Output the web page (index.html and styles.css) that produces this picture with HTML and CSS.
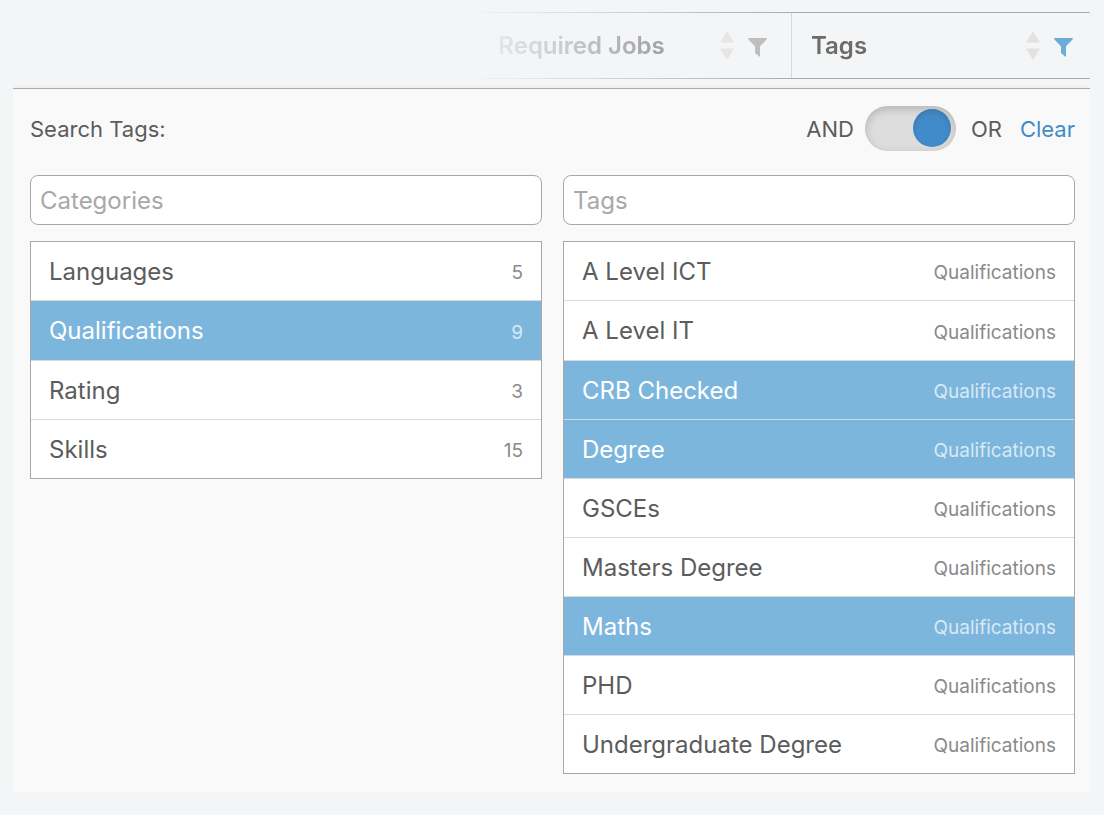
FILE: index.html
```html
<!DOCTYPE html>
<html lang="en">
<head>
<meta charset="utf-8">
<title>Search Tags</title>
<link rel="stylesheet" href="styles.css">
</head>
<body>
<svg class="defs" aria-hidden="true">
  <symbol id="sort" viewBox="0 0 14 29"><path d="M7 0L14 11.500H0ZM0 17.500H14L7 29Z"/></symbol>
  <symbol id="funnel" viewBox="0 0 19 19"><path d="M0.500 0H18.500Q19 0 18.800 1.200L12 8.200V18.200Q12 19 11.200 18.600L7.500 15.500Q7 15 7 14.500V8.200L0.200 1.200Q0 0 0.500 0Z"/></symbol>
</svg>
<main class="page">
  <header class="columns">
    <div class="column">
      <span class="column-name">Required Jobs</span>
      <button class="icon-button" type="button" aria-label="Sort by required jobs"><svg class="sort"><use href="#sort"/></svg></button>
      <button class="icon-button filter" type="button" aria-label="Filter required jobs"><svg class="funnel"><use href="#funnel"/></svg></button>
    </div>
    <div class="column column-tags">
      <span class="column-name">Tags</span>
      <button class="icon-button" type="button" aria-label="Sort by tags"><svg class="sort"><use href="#sort"/></svg></button>
      <button class="icon-button filter" type="button" aria-label="Filter tags"><svg class="funnel funnel-active"><use href="#funnel"/></svg></button>
    </div>
  </header>
  <section class="panel">
    <div class="toolbar">
      <h1 class="title">Search Tags:</h1>
      <label class="mode" for="mode">AND</label>
      <input class="toggle" id="mode" type="checkbox" role="switch" checked>
      <label class="mode mode-or" for="mode">OR</label>
      <a class="clear" href="#">Clear</a>
    </div>
    <div class="pickers">
      <div class="picker">
        <input class="search" type="text" placeholder="Categories" aria-label="Categories">
        <ul class="list">
          <li class="row"><button class="option" type="button">Languages<span class="note">5</span></button></li>
          <li class="row"><button class="option selected" type="button">Qualifications<span class="note">9</span></button></li>
          <li class="row"><button class="option" type="button">Rating<span class="note">3</span></button></li>
          <li class="row"><button class="option" type="button">Skills<span class="note">15</span></button></li>
        </ul>
      </div>
      <div class="picker">
        <input class="search" type="text" placeholder="Tags" aria-label="Tags">
        <ul class="list">
          <li class="row"><button class="option" type="button">A Level ICT<span class="note">Qualifications</span></button></li>
          <li class="row"><button class="option" type="button">A Level IT<span class="note">Qualifications</span></button></li>
          <li class="row"><button class="option selected" type="button">CRB Checked<span class="note">Qualifications</span></button></li>
          <li class="row"><button class="option selected" type="button">Degree<span class="note">Qualifications</span></button></li>
          <li class="row"><button class="option" type="button">GSCEs<span class="note">Qualifications</span></button></li>
          <li class="row"><button class="option" type="button">Masters Degree<span class="note">Qualifications</span></button></li>
          <li class="row"><button class="option selected" type="button">Maths<span class="note">Qualifications</span></button></li>
          <li class="row"><button class="option" type="button">PHD<span class="note">Qualifications</span></button></li>
          <li class="row"><button class="option" type="button">Undergraduate Degree<span class="note">Qualifications</span></button></li>
        </ul>
      </div>
    </div>
  </section>
</main>
</body>
</html>
```

FILE: styles.css
```css
* { box-sizing: border-box; }
body {
  margin: 0;
  background: #f4f5f7;
  color: #5c5c5c;
  font-family: Inter, "Liberation Sans", sans-serif;
  font-size: 24px;
  line-height: 32px;
}
button, input { font: inherit; color: inherit; margin: 0; }
.defs { position: absolute; width: 0; height: 0; }
.page { padding: 12px 14px 23px 13px; }

.columns {
  display: flex;
  width: 58%;
  margin-left: auto;
  border: solid #a9abad;
  border-width: 1px 0;
  -webkit-mask-image: linear-gradient(to right, transparent, #000 52%);
  mask-image: linear-gradient(to right, transparent, #000 52%);
}
.column {
  display: flex;
  align-items: center;
  gap: 14px;
  flex: 1 1 0;
  height: 65px;
  padding: 0 24px 0 33px;
  border-right: 1px solid #d6d8da;
}
.column-tags { flex: 0 0 298px; padding: 0 17px 0 19px; border-right: 0; }
.column-name { flex: 1; font-weight: 600; color: #6c6c6c; }
.icon-button { display: flex; padding: 0; border: 0; background: none; }
.filter { padding-top: 4px; }
.sort { width: 14px; height: 29px; fill: #e2e2e2; }
.funnel { width: 19px; height: 19px; fill: #b8b8b8; }
.funnel-active { fill: #6cacd9; }

.panel {
  margin-top: 9px;
  padding: 17px 15px 18px 17px;
  border-top: 1px solid #a9abad;
  background: #f9f9f9;
  box-shadow: 0 -3px 4px #efefef, 0 -9px 4px -3px #f8f8f8;
  clip-path: inset(-9px 0 0 0);
}
.toolbar { display: flex; align-items: center; height: 45px; margin-bottom: 24px; font-size: 22px; }
.title { flex: 1; margin: 0; font-size: 22px; font-weight: 400; }
.mode { margin-right: 11px; }
.mode-or { margin: 0 18px 0 15px; }
.clear { color: #428bca; text-decoration: none; }
.toggle {
  appearance: none;
  display: flex;
  width: 91px;
  height: 45px;
  padding: 3px 5px;
  border-radius: 23px;
  background: #dddddd;
  box-shadow: inset 0 3px 8px #00000030;
}
.toggle::before {
  content: "";
  width: 38px;
  height: 38px;
  border-radius: 50%;
  background: #428bca;
  box-shadow: inset 0 3px 6px #00000022;
}
.toggle:checked { justify-content: flex-end; }

.pickers { display: grid; grid-template-columns: 1fr 1fr; gap: 21px; align-items: start; }
.picker { display: flex; flex-direction: column; gap: 16px; }
.search {
  width: 100%;
  height: 50px;
  padding: 0 9px;
  border: 1px solid #a8a8a8;
  border-radius: 8px;
  background: #fff;
}
.search::placeholder { color: #a8a8a8; opacity: 1; }
.list { margin: 0; padding: 0; border: 1px solid #a8a8a8; background: #fff; list-style: none; }
.row + .row { border-top: 1px solid #d8dadb; }
.option {
  display: flex;
  align-items: center;
  justify-content: space-between;
  width: 100%;
  height: 58px;
  padding: 1px 18px 0;
  border: 0;
  background: none;
  text-align: left;
}
.row:nth-child(2) .option { height: 59px; }
.note { padding-top: 3px; font-size: 19px; color: #8a8a8a; }
.selected { background: #7db6dd; color: #fff; }
.selected .note { color: #d8e9f5; }
```
